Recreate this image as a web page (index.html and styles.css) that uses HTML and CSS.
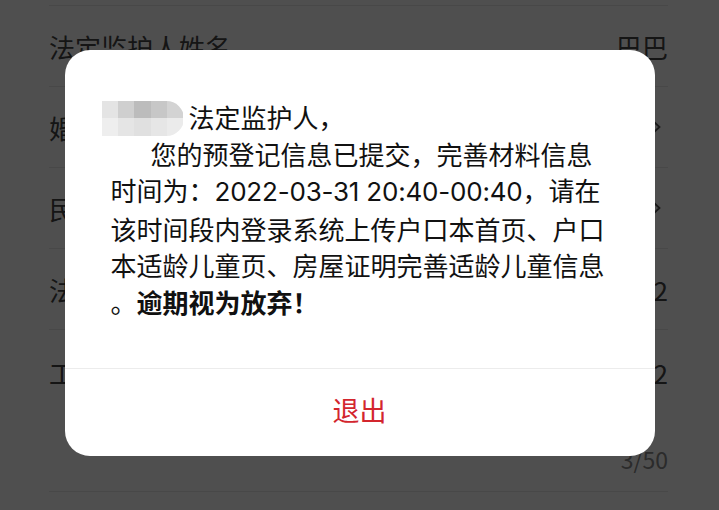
FILE: index.html
```html
<!DOCTYPE html>
<html lang="zh-CN">

<head>
    <meta charset="UTF-8">
    <meta name="viewport" content="width=device-width, initial-scale=1.0">
    <title>预登记</title>
    <link rel="stylesheet" href="styles.css">
</head>

<body>
    <!-- Form behind the dialog -->
    <div class="form">
        <div class="row">
            <span class="label">法定监护人姓名</span>
            <span class="value">巴巴</span>
        </div>
        <div class="row">
            <span class="label">婚姻状况</span>
            <span class="value">请选择
                <svg class="chevron" width="10" height="16" viewBox="0 0 10 16">
                    <polyline points="1.5,1.5 8.5,8 1.5,14.5" fill="none" stroke="#555" stroke-width="1.8" />
                </svg>
            </span>
        </div>
        <div class="row">
            <span class="label">民族</span>
            <span class="value">请选择
                <svg class="chevron" width="10" height="16" viewBox="0 0 10 16">
                    <polyline points="1.5,1.5 8.5,8 1.5,14.5" fill="none" stroke="#555" stroke-width="1.8" />
                </svg>
            </span>
        </div>
        <div class="row">
            <span class="label">法定监护人电话</span>
            <span class="value">13800000002</span>
        </div>
        <div class="row row-area">
            <div class="area-top">
                <span class="label">工作单位</span>
                <span class="value">312</span>
            </div>
            <div class="counter">3/50</div>
        </div>
    </div>

    <!-- Notice dialog -->
    <div class="overlay">
        <div class="dialog">
            <div class="dialog-body">
                <span class="mosaic">
                    <i style="background:#e4e4e4"></i><i style="background:#cfcfcf"></i><i style="background:#bcbcbc"></i><i style="background:#c7c7c7"></i><i style="background:#d3d3d3"></i>
                    <i style="background:#eeeeee"></i><i style="background:#e5e5e5"></i><i style="background:#e0e0e0"></i><i style="background:#e6e6e6"></i><i style="background:#ebebeb"></i>
                </span>法定监护人，<br>
                <span class="indent">您的预登记信息已提交，完善材料信息</span><br>
                时间为：<span class="num">2022-03-31 20:40-00:40</span>，请在<br>
                该时间段内登录系统上传户口本首页、户口<br>
                本适龄儿童页、房屋证明完善适龄儿童信息<br>
                。<b>逾期视为放弃！</b>
            </div>
            <div class="dialog-btn">退出</div>
        </div>
    </div>
</body>

</html>
```

FILE: styles.css
```css
body {
    margin: 0;
    height: 510px;
    overflow: hidden;
    background-color: #fff;
    font-family: "Noto Sans CJK SC", "Noto Sans", sans-serif;
}

/* form rows */
.form {
    margin: 5px 51px 0 49px;
    border-top: 1px solid #e8e8e8;
}

.row {
    display: flex;
    justify-content: space-between;
    align-items: center;
    height: 80px;
    border-bottom: 1px solid #e8e8e8;
    font-size: 26px;
    color: #444;
}

.value {
    display: flex;
    align-items: center;
    gap: 8px;
}

.chevron {
    margin-right: 7px;
}

.row-area {
    display: block;
    height: 161px;
}

.area-top {
    display: flex;
    justify-content: space-between;
    align-items: center;
    height: 84px;
}

.counter {
    text-align: right;
    font-size: 23px;
    line-height: 33px;
    color: #8a8a8a;
    margin-top: 29px;
}

/* dialog */
.overlay {
    position: fixed;
    top: 0;
    left: 0;
    width: 100%;
    height: 100%;
    background-color: rgba(0, 0, 0, 0.69);
    display: flex;
    justify-content: center;
    align-items: flex-start;
    padding-top: 50px;
    box-sizing: border-box;
}

.dialog {
    width: 590px;
    background-color: #fff;
    border-radius: 25px;
    overflow: hidden;
}

.dialog-body {
    padding: 49px 44px 48px 46px;
    font-size: 26px;
    line-height: 36.5px;
    color: #111;
    white-space: nowrap;
}

.dialog-body b {
    font-weight: 700;
}

.num {
    font-family: "Inter", "Noto Sans CJK SC", sans-serif;
    letter-spacing: -0.2px;
}

.indent {
    padding-left: 40px;
}

.mosaic {
    display: inline-grid;
    grid-template-columns: repeat(5, 1fr);
    width: 82px;
    height: 35px;
    margin: 1.5px 5px 0 -9px;
    vertical-align: top;
    border-radius: 0 19px 19px 0;
    overflow: hidden;
}

.mosaic i {
    display: block;
}

.dialog-btn {
    height: 80px;
    padding-bottom: 7px;
    border-top: 1px solid #ececec;
    display: flex;
    justify-content: center;
    align-items: center;
    font-size: 27px;
    color: #d3262e;
}
```
